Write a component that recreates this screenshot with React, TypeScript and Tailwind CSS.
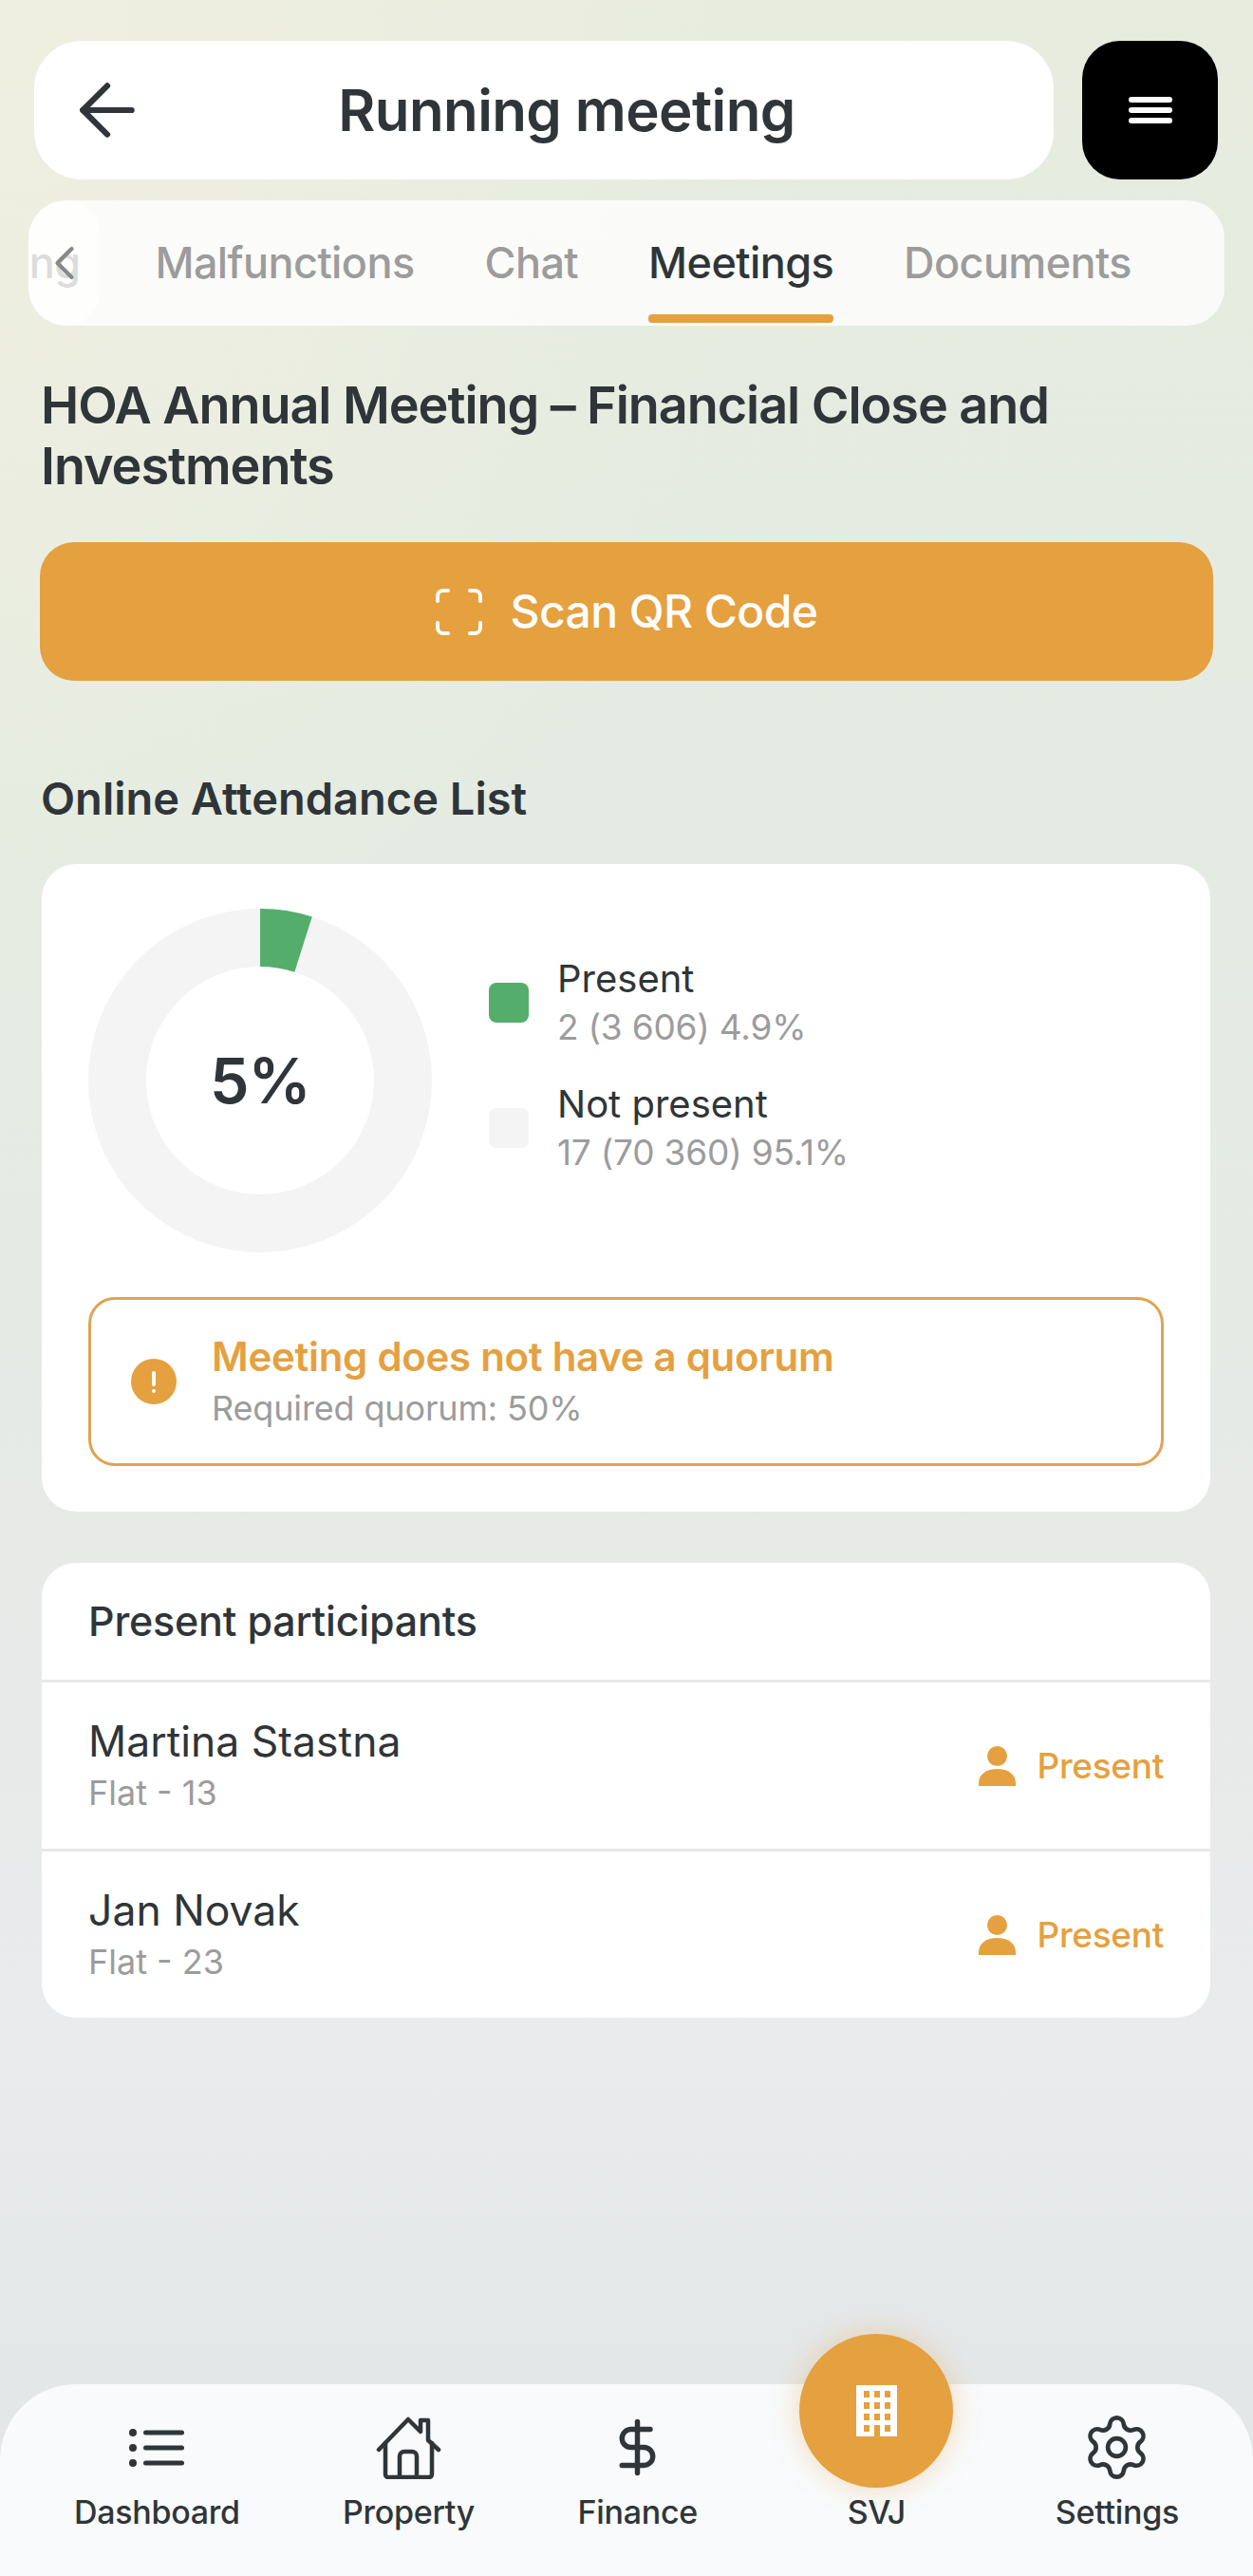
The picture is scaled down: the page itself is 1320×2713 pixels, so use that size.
import { ArrowLeft, ChevronLeft, DollarSign, Settings } from "lucide-react";

const DARK = "text-[#2f3538]";
const GREY = "text-[#9c9c9c]";

const tabs = ["Voting", "Malfunctions", "Chat", "Meetings", "Documents"];

const participants = [
  { name: "Martina Stastna", flat: "Flat - 13" },
  { name: "Jan Novak", flat: "Flat - 23" },
];

function ScanIcon() {
  return (
    <svg width="49" height="49" viewBox="0 0 49 49" fill="none" stroke="#fff" strokeWidth="4" strokeLinecap="round">
      <path d="M2 13V8a6 6 0 0 1 6-6h5" />
      <path d="M36 2h5a6 6 0 0 1 6 6v5" />
      <path d="M47 36v5a6 6 0 0 1-6 6h-5" />
      <path d="M13 47H8a6 6 0 0 1-6-6v-5" />
    </svg>
  );
}

function PersonIcon() {
  return (
    <svg width="39" height="42" viewBox="0 0 39 42" fill="#e5a03f">
      <circle cx="19.5" cy="10.5" r="10.5" />
      <path d="M0 42v-3C0 30 8 24 19.5 24S39 30 39 39v3z" />
    </svg>
  );
}

function ListIcon() {
  return (
    <svg width="58" height="40" viewBox="0 0 58 40" fill="#2f3538">
      <circle cx="4" cy="4" r="4" />
      <circle cx="4" cy="20" r="4" />
      <circle cx="4" cy="36" r="4" />
      <rect x="15" y="1.5" width="43" height="5" rx="2.5" />
      <rect x="15" y="17.5" width="43" height="5" rx="2.5" />
      <rect x="15" y="33.5" width="43" height="5" rx="2.5" />
    </svg>
  );
}

function HouseIcon() {
  return (
    <svg width="69" height="66" viewBox="0 0 69 66" fill="none" stroke="#2f3538" strokeWidth="4.5" strokeLinejoin="round" strokeLinecap="round">
      <path d="M3 35 34 3l13 13V4h8v21l11 10" />
      <path d="M10 28v33a3 3 0 0 0 3 3h43a3 3 0 0 0 3-3V28" />
      <path d="M25 64V42a5 5 0 0 1 5-5h8a5 5 0 0 1 5 5v22" />
    </svg>
  );
}

function BuildingIcon() {
  const rows = [6, 18, 30];
  const cols = [8, 19, 30];
  return (
    <svg width="43" height="54" viewBox="0 0 43 54">
      <rect width="43" height="54" fill="#fff" />
      {rows.map((y) =>
        cols.map((x) => <rect key={`${x}-${y}`} x={x} y={y} width="6" height="7" fill="#e5a03f" />)
      )}
      <rect x="8" y="42" width="6" height="7" fill="#e5a03f" />
      <rect x="30" y="42" width="6" height="7" fill="#e5a03f" />
      <rect x="19" y="42" width="6" height="12" fill="#e5a03f" />
    </svg>
  );
}

function Donut() {
  return (
    <div className="relative h-[362px] w-[362px] shrink-0">
      <svg width="362" height="362" viewBox="0 0 362 362" fill="none">
        <circle cx="181" cy="181" r="150.5" stroke="#f4f4f4" strokeWidth="61" />
        <circle
          cx="181"
          cy="181"
          r="150.5"
          stroke="#55ad6c"
          strokeWidth="61"
          strokeDasharray="46.3 900"
          transform="rotate(-90 181 181)"
        />
      </svg>
      <div className={`absolute inset-0 flex items-center justify-center text-[66px] font-semibold tracking-[-1px] ${DARK}`}>
        5%
      </div>
    </div>
  );
}

function Legend({ color, label, value }: { color: string; label: string; value: string }) {
  return (
    <div className="flex items-center gap-[30px]">
      <div className={`h-[42px] w-[42px] rounded-[8px] ${color}`} />
      <div>
        <p className={`text-[40px] leading-[51px] ${DARK}`}>{label}</p>
        <p className={`text-[37px] leading-[51px] tracking-[-0.2px] ${GREY}`}>{value}</p>
      </div>
    </div>
  );
}

function NavItem({ label, icon }: { label: string; icon: React.ReactNode }) {
  return (
    <div className="flex flex-col items-center">
      <div className="flex h-[77px] items-center justify-center">{icon}</div>
      <p className={`mt-[8px] text-[34px] font-medium leading-[44px] tracking-[-0.3px] ${DARK}`}>{label}</p>
    </div>
  );
}

export default function App() {
  return (
    <div className="flex h-[2713px] w-[1320px] flex-col overflow-hidden bg-[radial-gradient(ellipse_800px_1300px_at_0_0,#efefe0,rgba(239,239,224,0)),linear-gradient(180deg,#e8ecdf_0%,#e3ebe2_30%,#e7eae7_60%,#e9ebed_80%,#e4e7e8_92%)] font-[Inter,sans-serif]">
      {/* Header */}
      <div className="mt-[43px] flex gap-[30px] pl-[36px] pr-[37px]">
        <div className="relative flex h-[146px] flex-1 items-center justify-center rounded-[50px] bg-white pl-[48px]">
          <ArrowLeft className="absolute left-[33px] text-[#2f3538]" size={88} strokeWidth={1.7} />
          <h2 className={`text-[60px] font-semibold tracking-[-0.6px] ${DARK}`}>Running meeting</h2>
        </div>
        <div className="flex h-[146px] w-[143px] flex-col items-center justify-center gap-[5px] rounded-[40px] bg-black">
          <div className="h-[6px] w-[46px] rounded-full bg-white" />
          <div className="h-[6px] w-[46px] rounded-full bg-white" />
          <div className="h-[6px] w-[46px] rounded-full bg-white" />
        </div>
      </div>

      {/* Tabs */}
      <div className="relative mx-[30px] mt-[22px] flex h-[132px] justify-end gap-[74px] overflow-hidden rounded-[40px] bg-white/80 pr-[98px]">
        {tabs.map((tab) => (
          <div key={tab} className={`flex h-[129px] shrink-0 flex-col ${tab === "Voting" ? "mr-[5px]" : ""}`}>
            <div
              className={`flex flex-1 items-center pt-[12px] text-[45px] font-medium tracking-[-0.6px] ${
                tab === "Meetings" ? DARK : GREY
              }`}
            >
              {tab}
            </div>
            <div className={`h-[9px] rounded-[4px] ${tab === "Meetings" ? "bg-[#e5a03f]" : "bg-transparent"}`} />
          </div>
        ))}
        <div className="absolute bottom-0 left-0 top-0 flex w-[75px] items-center rounded-[36px] bg-white/65">
          <ChevronLeft className="ml-[8px] text-[#888888]" size={60} strokeWidth={1.7} />
        </div>
      </div>

      {/* Content */}
      <div className="flex flex-col px-[43px]">
        <h1 className={`mt-[52px] text-[54px] font-semibold leading-[64px] tracking-[-1.07px] ${DARK}`}>
          HOA Annual Meeting – Financial Close and Investments
        </h1>

        <button className="-mx-px mt-[48px] flex h-[146px] items-center justify-center gap-[30px] rounded-[36px] bg-[#e5a03f] text-[48px] font-medium tracking-[-0.6px] text-white">
          <ScanIcon />
          Scan QR Code
        </button>

        <h3 className={`mt-[96px] text-[47px] font-semibold leading-[56px] ${DARK}`}>Online Attendance List</h3>

        <div className="mt-[41px] ml-px mr-[2px] rounded-[36px] bg-white px-[49px] pb-[48px] pt-[47px]">
          <div className="flex gap-[60px]">
            <Donut />
            <div className="mt-[48px] flex flex-col gap-[30px] self-start">
              <Legend color="bg-[#55ad6c]" label="Present" value="2 (3 606) 4.9%" />
              <Legend color="bg-[#f4f4f4]" label="Not present" value="17 (70 360) 95.1%" />
            </div>
          </div>

          <div className="mt-[47px] flex h-[178px] items-center gap-[37px] rounded-[28px] border-[3px] border-[#dfa352] px-[42px]">
            <div className="flex h-[48px] w-[48px] items-center justify-center rounded-full bg-[#e5a03f]">
              <div className="flex flex-col items-center gap-[3px]">
                <div className="h-[16px] w-[4px] rounded-full bg-white" />
                <div className="h-[4px] w-[4px] rounded-full bg-white" />
              </div>
            </div>
            <div>
              <p className="pt-[2px] text-[42px] font-semibold leading-[52px] tracking-[-0.3px] text-[#e5a03f]">
                Meeting does not have a quorum
              </p>
              <p className={`mt-[2px] text-[36px] leading-[52px] tracking-[-0.15px] ${GREY}`}>Required quorum: 50%</p>
            </div>
          </div>
        </div>

        <div className="mt-[54px] ml-px mr-[2px] overflow-hidden rounded-[36px] bg-white">
          <div className={`flex h-[126px] items-center border-b-[3px] border-[#e8e8e8] px-[49px] text-[43px] font-medium tracking-[-0.2px] ${DARK}`}>
            Present participants
          </div>
          {participants.map((p, index) => (
            <div
              key={p.name}
              className={`flex items-center justify-between px-[49px] ${
                index === 0 ? "h-[178px] border-b-[3px] border-[#e8e8e8]" : "h-[175px]"
              }`}
            >
              <div className="pt-[3px]">
                <p className={`text-[44.5px] leading-[52px] ${DARK}`}>{p.name}</p>
                <p className={`mt-[2px] text-[36px] leading-[52px] ${GREY}`}>{p.flat}</p>
              </div>
              <div className="flex items-center gap-[23px] text-[37px] font-medium tracking-[-0.3px] text-[#e5a03f]">
                <PersonIcon />
                Present
              </div>
            </div>
          ))}
        </div>
      </div>

      {/* Bottom nav */}
      <div className="mt-auto flex h-[202px] items-end justify-between rounded-t-[80px] bg-[#f8fafb] px-[78px] pb-[45px]">
        <NavItem label="Dashboard" icon={<ListIcon />} />
        <NavItem label="Property" icon={<HouseIcon />} />
        <NavItem label="Finance" icon={<DollarSign className="text-[#2f3538]" size={65} strokeWidth={2} />} />
        <div className="flex w-[160px] flex-col items-center">
          <div className="flex h-[162px] w-[162px] items-center justify-center rounded-full bg-[#e5a03f] shadow-[0_0_30px_rgba(229,160,63,0.35)]">
            <BuildingIcon />
          </div>
          <p className={`mt-[4px] text-[34px] font-medium leading-[44px] tracking-[-0.3px] ${DARK}`}>SVJ</p>
        </div>
        <NavItem label="Settings" icon={<Settings className="text-[#2f3538]" size={75} strokeWidth={1.5} />} />
      </div>
    </div>
  );
}
